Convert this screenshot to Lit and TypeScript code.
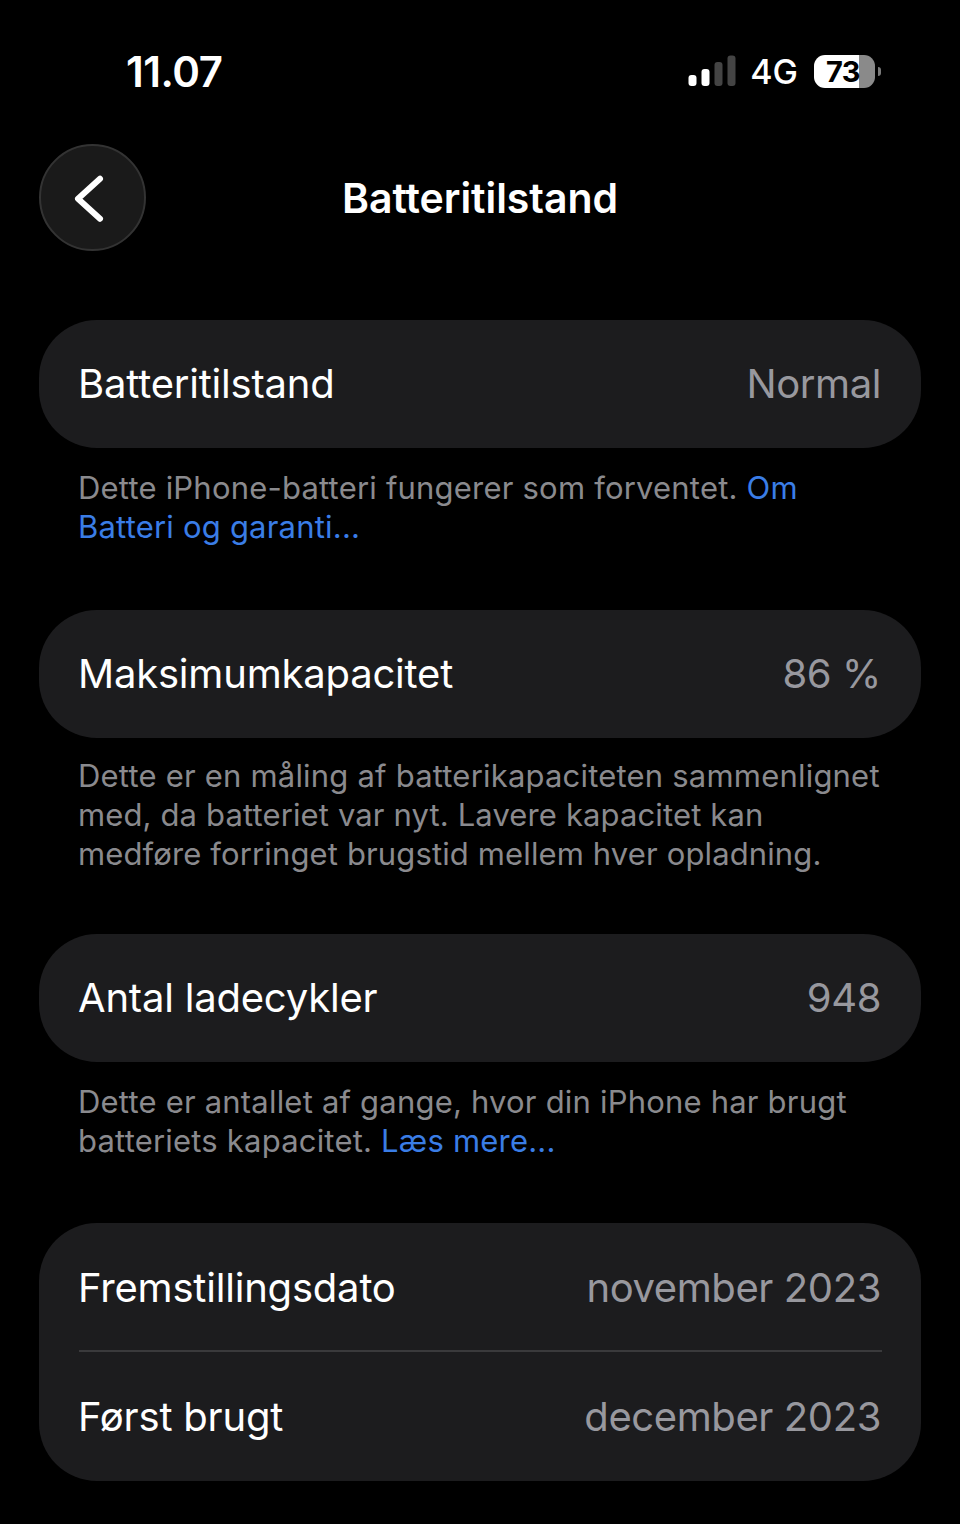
import { LitElement, css, html } from "lit";
import { customElement } from "lit/decorators.js";

@customElement("app-root")
export class AppRoot extends LitElement {
  static styles = css`
    :host {
      display: block;
      width: 960px;
      height: 1524px;
      overflow: hidden;
      background: #000;
      color: #fff;
      font-family: Inter, "Liberation Sans", sans-serif;
    }

    .status {
      display: flex;
      align-items: center;
      justify-content: space-between;
      height: 50px;
      padding: 46px 85px 0 126px;
    }
    .time {
      font-size: 42px;
      font-weight: 600;
      letter-spacing: -0.5px;
    }
    .status-right {
      display: flex;
      align-items: center;
      gap: 16px;
    }
    .signal {
      margin: -2px -2px 0 0;
    }
    .network {
      font-size: 34px;
      font-weight: 500;
    }
    .battery {
      position: relative;
      display: flex;
      align-items: center;
      justify-content: center;
      width: 61px;
      height: 33px;
      padding-right: 3px;
      box-sizing: border-box;
      border-radius: 11px;
      background: linear-gradient(90deg, #fff 73%, #8a8a8a 73%);
      color: #000;
      font-size: 29px;
      font-weight: 700;
      letter-spacing: -0.5px;
    }
    .battery::after {
      content: "";
      position: absolute;
      right: -6px;
      top: 12px;
      width: 3px;
      height: 9px;
      border-radius: 0 3px 3px 0;
      background: #7a7a7a;
    }

    .nav {
      position: relative;
      display: flex;
      align-items: center;
      justify-content: center;
      height: 106px;
      margin-top: 49px;
    }
    .back {
      position: absolute;
      left: 39px;
      top: -1px;
      width: 107px;
      height: 107px;
      box-sizing: border-box;
      border-radius: 50%;
      background: #1a1a1a;
      border: 2px solid #333;
    }
    .back svg {
      display: block;
      margin: -2px;
    }
    .title {
      font-size: 41px;
      font-weight: 600;
      letter-spacing: -0.05px;
    }

    .content {
      display: flex;
      flex-direction: column;
      padding: 69px 39px 0;
    }
    .card {
      background: #1c1c1e;
      border-radius: 58px;
      padding: 0 40px;
    }
    .row {
      display: flex;
      align-items: center;
      justify-content: space-between;
      box-sizing: border-box;
      height: 128px;
      font-size: 40px;
      letter-spacing: -0.2px;
    }
    .row.single {
      padding-bottom: 2px;
    }
    .row.first {
      height: 127px;
      padding-top: 1px;
    }
    .row.second {
      height: 131px;
      border-top: 2px solid #3a3a3c;
      margin-right: -1px;
      padding-right: 1px;
    }
    .label {
      margin-left: -1px;
    }
    .value {
      color: #98989e;
      letter-spacing: -0.4px;
    }
    .note {
      margin: 0;
      padding: 20px 0 0 39px;
      height: 162px;
      box-sizing: border-box;
      font-size: 31px;
      line-height: 39px;
      letter-spacing: 0.2px;
      color: #8a8a8e;
    }
    .note.three {
      height: 196px;
      padding-top: 18px;
    }
    .note.last {
      height: 161px;
    }
    .note span {
      display: block;
      white-space: nowrap;
    }
    .compact {
      letter-spacing: 0.13px;
    }
    a {
      color: #3a7de6;
      text-decoration: none;
    }
  `;

  private row(label: string, value: string, kind = "single") {
    return html`<div class="row ${kind}"><span class="label">${label}</span><span class="value">${value}</span></div>`;
  }

  render() {
    return html`
      <div class="status">
        <span class="time">11.07</span>
        <div class="status-right">
          <svg class="signal" width="48" height="31" viewBox="0 0 48 31">
            <rect x="0.5" y="20" width="8" height="11" rx="3" fill="#fff" />
            <rect x="13.5" y="14" width="8" height="17" rx="3" fill="#fff" />
            <rect x="26.5" y="7" width="8" height="24" rx="3" fill="#444" />
            <rect x="39.5" y="0.5" width="8" height="30.5" rx="3" fill="#444" />
          </svg>
          <span class="network">4G</span>
          <span class="battery">73</span>
        </div>
      </div>

      <div class="nav">
        <div class="back">
          <svg width="107" height="107" viewBox="0 0 107 107">
            <path d="M61 34.7 L39 54.7 L61 74.7" fill="none" stroke="#fff" stroke-width="6" stroke-linecap="round" stroke-linejoin="round" />
          </svg>
        </div>
        <span class="title">Batteritilstand</span>
      </div>

      <div class="content">
        <div class="card">${this.row("Batteritilstand", "Normal")}</div>
        <p class="note">
          <span>Dette iPhone-batteri fungerer som forventet. <a>Om</a></span>
          <span><a>Batteri og garanti...</a></span>
        </p>

        <div class="card">${this.row("Maksimumkapacitet", "86 %")}</div>
        <p class="note three">
          <span>Dette er en måling af batterikapaciteten sammenlignet</span>
          <span class="compact">med, da batteriet var nyt. Lavere kapacitet kan</span>
          <span class="compact">medføre forringet brugstid mellem hver opladning.</span>
        </p>

        <div class="card">${this.row("Antal ladecykler", "948")}</div>
        <p class="note last">
          <span>Dette er antallet af gange, hvor din iPhone har brugt</span>
          <span>batteriets kapacitet. <a>Læs mere...</a></span>
        </p>

        <div class="card">
          ${this.row("Fremstillingsdato", "november 2023", "first")}
          ${this.row("Først brugt", "december 2023", "second")}
        </div>
      </div>
    `;
  }
}
